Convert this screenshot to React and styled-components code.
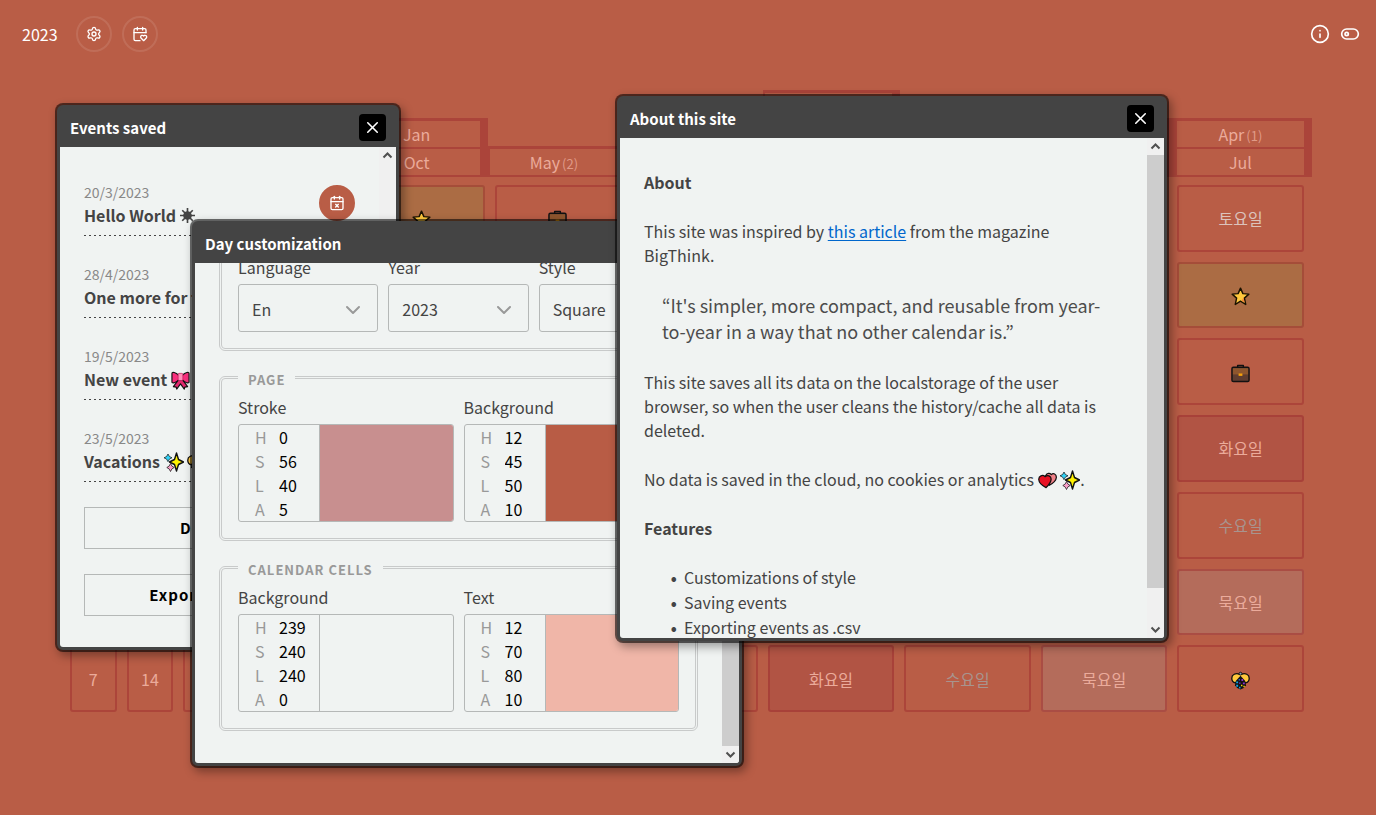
import React from "react";
import styled, { createGlobalStyle, css } from "styled-components";
import { Settings, CalendarX, Info, X, ChevronDown } from "lucide-react";

const page = "#b95d46";
const stroke = "#ab443a";
const pale = "#ebab9b";
const panel = "#f0f3f2";
const ink = "#444";

const GlobalStyle = createGlobalStyle`
  *, *::before, *::after { box-sizing: border-box; }
  body {
    margin: 0;
    background: ${page};
    color: ${ink};
    font-family: "Noto Sans CJK KR", "Noto Sans", sans-serif;
    font-size: 16px;
    line-height: 24px;
  }
  button, input, select { font: inherit; letter-spacing: inherit; }
  h1, h2, h3, p, ul, blockquote { margin: 0; padding: 0; font-size: inherit; }
`;

/* ---------- Page ---------- */

const Page = styled.div`
  position: relative;
  display: flex;
  flex-direction: column;
  min-height: 100vh;
  overflow: hidden;
`;

const TopBar = styled.header`
  display: flex;
  align-items: center;
  gap: 10px;
  height: 68px;
  padding: 0 16px 0 22px;
  color: #fff;
`;

const YearTitle = styled.h1`
  margin-right: 8px;
  font-weight: 400;
`;

const Spacer = styled.div`
  flex: 1;
`;

const RoundButton = styled.button`
  display: grid;
  place-items: center;
  flex: none;
  width: 36px;
  height: 36px;
  padding: 0;
  border: 2px solid ${(p) => (p.$filled ? page : "rgba(255, 255, 255, 0.1)")};
  border-radius: 50%;
  background: ${(p) => (p.$filled ? page : "transparent")};
  color: #fff;
`;

const IconButton = styled.button`
  display: grid;
  place-items: center;
  padding: 0;
  border: 0;
  background: none;
  color: #fff;
`;

const LineIcon = styled.svg`
  width: ${(p) => p.$size}px;
  height: ${(p) => p.$size}px;
  fill: none;
  stroke: currentColor;
  stroke-width: 2;
  stroke-linecap: round;
  stroke-linejoin: round;
`;

/* ---------- Calendar ---------- */

const Calendar = styled.main`
  flex: 1;
  display: grid;
  grid-template-columns: 273fr 961fr;
  grid-template-rows: auto 1fr;
  gap: 8px;
  padding: 22px 64px 103px 70px;
`;

const Months = styled.div`
  grid-column: 2;
  display: grid;
  grid-template-columns: repeat(7, 1fr);
  align-items: end;
`;

const MonthStack = styled.div`
  display: grid;
  gap: 2px;
  padding: 3px 8px 2px 2px;
  background: ${stroke};
`;

const Month = styled.div`
  display: flex;
  justify-content: center;
  align-items: baseline;
  gap: 2px;
  height: 26px;
  line-height: 26px;
  background: ${page};
  color: ${pale};
  small {
    font-size: 13px;
    color: #e09a88;
  }
`;

const Days = styled.div`
  display: grid;
  grid-auto-flow: column;
  grid-template-columns: repeat(5, 1fr);
  grid-template-rows: repeat(7, 1fr);
  gap: 10px;
`;

const Weekdays = styled.div`
  display: grid;
  grid-template-columns: repeat(7, 1fr);
  grid-template-rows: repeat(7, 1fr);
  gap: 10px;
  padding: 0 8px 0 7px;
`;

const Cell = styled.div`
  display: grid;
  place-items: center;
  min-width: 0;
  border: 2px solid rgba(159, 45, 45, 0.5);
  border-radius: 3px;
  background: ${(p) => p.$bg || "transparent"};
  color: ${(p) => p.$color || pale};
`;

/* ---------- Windows ---------- */

const WindowFrame = styled.section`
  position: absolute;
  left: ${(p) => p.$x}px;
  top: ${(p) => p.$y}px;
  width: ${(p) => p.$w}px;
  border: 3px solid ${ink};
  border-radius: 6px;
  background: ${ink};
  box-shadow: 0 0 0 2px rgba(0, 0, 0, 0.55), 3px 4px 10px 2px rgba(0, 0, 0, 0.35);
`;

const TitleBar = styled.header`
  display: flex;
  align-items: center;
  justify-content: space-between;
  height: 39px;
  padding: 0 10px;
  color: #fff;
`;

const Title = styled.h2`
  font-size: 15px;
  font-weight: 600;
`;

const CloseButton = styled.button`
  display: grid;
  place-items: center;
  width: 27px;
  height: 27px;
  padding: 0;
  border: 0;
  border-radius: 4px;
  background: #000;
  color: #fff;
`;

const WindowBody = styled.div`
  display: flex;
  height: 500px;
  background: ${panel};
  border-radius: 0 0 3px 3px;
  overflow: hidden;
`;

const Content = styled.div`
  flex: 1;
  min-width: 0;
  display: flex;
  flex-direction: column;
  gap: ${(p) => p.$gap}px;
  padding: 32px 24px;
  overflow: hidden;
  justify-content: ${(p) => (p.$atEnd ? "flex-end" : "flex-start")};
  > * { flex: none; }
`;

const Scrollbar = styled.div`
  display: flex;
  flex-direction: column;
  width: 17px;
  background: #f0f0f0;
`;

const Arrow = styled.svg`
  flex: none;
  width: 17px;
  height: 17px;
  fill: none;
  stroke: #505050;
  stroke-width: 2;
`;

const Track = styled.div`
  flex: 1;
  display: flex;
  flex-direction: column;
  justify-content: ${(p) => (p.$atEnd ? "flex-end" : "flex-start")};
`;

const Thumb = styled.div`
  height: ${(p) => p.$size}%;
  background: #cdcdcd;
`;

/* ---------- Events ---------- */

const EventRow = styled.article`
  display: flex;
  align-items: center;
  justify-content: space-between;
  padding: 2px 0 9px;
  background: repeating-linear-gradient(90deg, ${ink} 0 2px, transparent 2px 5px) left bottom / 100% 1px no-repeat;
  line-height: 23px;
  button { margin-bottom: 2px; }
`;

const EventDate = styled.time`
  display: block;
  font-size: 14px;
  color: #888;
`;

const EventName = styled.h3`
  height: 23px;
  font-weight: 700;
  white-space: nowrap;
`;

const WideButton = styled.button`
  height: 42px;
  border: 1px solid #b5b8b7;
  background: transparent;
  color: #000;
  font-size: 15px;
  font-weight: 700;
  letter-spacing: 1px;
`;

/* ---------- Day customization ---------- */

const Group = styled.fieldset`
  display: grid;
  grid-template-columns: repeat(${(p) => p.$cols}, minmax(0, 1fr));
  gap: 10px;
  min-width: 0;
  margin: 0;
  padding: 8px 16px 16px;
  border: 3px double #c8caca;
  border-radius: 6px;
`;

const Legend = styled.legend`
  height: 20px;
  padding: 3px 10px 0;
  color: #999;
  font-size: 13px;
  font-weight: 700;
  line-height: 20px;
  letter-spacing: 1px;
  text-transform: uppercase;
`;

const Field = styled.div`
  display: grid;
  gap: 5px;
`;

const boxed = css`
  border: 1px solid #b5b8b7;
  border-radius: 3px;
`;

const SelectBox = styled.div`
  display: grid;
  align-items: center;
  > * { grid-area: 1 / 1; }
  svg {
    justify-self: end;
    margin: 3px 13px 0 0;
    color: #999;
    pointer-events: none;
  }
`;

const Select = styled.select`
  ${boxed}
  appearance: none;
  width: 100%;
  height: 48px;
  padding: 1px 13px 0;
  background: transparent;
  color: ${ink};
`;

const ColorBox = styled.div`
  ${boxed}
  display: grid;
  grid-template-columns: 81px 1fr;
  overflow: hidden;
`;

const Channels = styled.div`
  padding-left: 16px;
  border-right: 1px solid #b5b8b7;
`;

const Channel = styled.label`
  display: grid;
  grid-template-columns: 24px 1fr;
  height: 24px;
  color: #999;
`;

const ChannelInput = styled.input`
  width: 100%;
  height: 24px;
  padding: 0;
  border: 0;
  background: none;
  color: #000;
`;

const Swatch = styled.div`
  background: ${(p) => p.$color};
`;

/* ---------- About ---------- */

const Heading = styled.h3`
  font-weight: 700;
`;

const Link = styled.a`
  color: #06c;
  text-underline-offset: 2px;
`;

const Quote = styled.blockquote`
  padding: 0 18px 1px;
  color: #4c4c4c;
  font-size: 18px;
  font-weight: 400;
  line-height: 26px;
`;

const Features = styled.ul`
  padding-left: 40px;
  line-height: 25px;
  list-style-type: "•  ";
  li::marker { font-weight: 700; }
`;

/* ---------- Emoji drawings ---------- */

const Emoji = styled.svg`
  display: inline-block;
  width: ${(p) => p.$size || 19}px;
  height: ${(p) => p.$size || 19}px;
  vertical-align: ${(p) => (p.$size === 15 ? -1 : -4)}px;
  stroke-linejoin: round;
`;

const Star = () => (
  <Emoji viewBox="0 0 20 20" role="img" aria-label="star">
    <path d="M10 1.2 12.5 7l6.3.5-4.7 4.2 1.4 6.7-5.5-3.5-5.5 3.5 1.4-6.7L1.2 7.5 7.5 7Z" fill="#ffc83d" stroke="#1a1200" strokeWidth="1.5" />
    <path d="m13 11 1.5 5.5-3-2Z" fill="#f2803a" />
  </Emoji>
);

const Briefcase = () => (
  <Emoji viewBox="0 0 20 20" role="img" aria-label="briefcase">
    <path d="M7 4V1.5h6V4" fill="none" stroke="#111" strokeWidth="1.5" />
    <rect x="1" y="3.5" width="18" height="15" rx="1.5" fill="#603d30" stroke="#111" strokeWidth="1.5" />
    <path d="M2 4.500h16V11H2Z" fill="#8e562e" />
    <rect x="8" y="10" width="4" height="2.5" fill="#f7a30b" />
  </Emoji>
);

const Bug = () => (
  <Emoji viewBox="0 0 20 20" role="img" aria-label="bee">
    <path d="M9 3.500C5 1.500.8 4 .8 7.500c0 3 1.500 4.500 4 5L10 9l5.200 3.500c2.500-.5 4-2 4-5C19.200 4 15 1.500 11 3.500Z" fill="#ffc83d" stroke="#111" strokeWidth="1.4" />
    <path d="M10 5 5 10.500 4.200 15 6.500 18l3.500 1.500 3.500-1.500 2.300-3-.8-4.500Z" fill="#111" />
    <circle cx="10" cy="2.8" r="1.5" fill="#8fa3ad" stroke="#111" />
    <path d="M5.500 11h2v2h-2Zm0 3.500h2v2h-2Zm3 2H10v2H8.500Z" fill="#0aa5e8" />
    <path d="M11 8.500h1.800v2H11Zm1.500 3.500h2v2h-2Zm-4 0H10v1.500H8.500Z" fill="#8b2fd0" />
    <path d="M10.500 14.500H12V16h-1.500Zm2.500 1h1.500V17H13Z" fill="#f7d308" />
    <path d="M8 8.500h1.500V10H8Z" fill="#2b62d9" />
  </Emoji>
);

const Sparkles = () => (
  <Emoji viewBox="0 0 20 20" $size={20} role="img" aria-label="sparkles">
    <path d="M12.5 1 14.5 7.500 19.500 10l-5 2.500-2 6.500-2-6.500-5-2.500 5-2.500Z" fill="#fff100" stroke="#111" strokeWidth="1.4" />
    <path d="m4 2 1.400 2.500L8 5.800 5.400 7.100 4 9.700 2.600 7.100 0 5.800l2.600-1.300Z" fill="#31d2f7" stroke="#111" strokeWidth=".7" />
    <path d="m6.500 11.500 1.400 2.600 2.300 1.400-2.300 1.400-1.400 2.600-1.400-2.600-2.300-1.400 2.300-1.400Z" fill="#f9a0c8" stroke="#111" strokeWidth=".7" />
  </Emoji>
);

const Hearts = () => (
  <Emoji viewBox="0 0 20 20" role="img" aria-label="hearts">
    <path d="M12 15 8 5c1.500-3 4.500-3 6-1.200C16 2 19.500 3 19.300 6.800 19.100 10.500 15.500 13 12 15Z" fill="#f08088" stroke="#111" strokeWidth="1.3" />
    <path d="M8.500 17.500C4.500 15.500 1 12.500.8 9 .6 5 5 3.500 7.500 6c2.500-2.500 6.500-.8 6.300 2.800-.2 3.200-2.800 6.200-5.300 8.700Z" fill="#e81224" stroke="#111" strokeWidth="1.3" />
  </Emoji>
);

const Ribbon = () => (
  <Emoji viewBox="0 0 20 20" role="img" aria-label="ribbon">
    <path d="m8 9-5.500 7.500 3 .5.5 2L10 13.500l4 5.500.5-2 3-.5L12 9Z" fill="#e3286e" stroke="#111" strokeWidth="1.2" />
    <path d="M8 4.500C5 1.500 1 .5 1 2.500v9c0 2 4 1 7-2h4c3 3 7 4 7 2v-9c0-2-4-1-7 2Z" fill="#f92f7d" stroke="#111" strokeWidth="1.2" />
    <rect x="7.5" y="2.5" width="5" height="7.5" rx="1" fill="#ff8db8" stroke="#c51a5c" strokeWidth=".8" />
  </Emoji>
);

const Sun = () => (
  <Emoji viewBox="0 0 20 20" $size={15} role="img" aria-label="sun">
    <path d="M10 0v20M0 10h20M3 3l14 14M17 3 3 17" stroke="#444" strokeWidth="2.2" />
    <circle cx="10" cy="10" r="5.8" fill="#444" />
  </Emoji>
);

/* ---------- Line icons ---------- */

const CalendarHeart = () => (
  <LineIcon viewBox="0 0 24 24" $size={16} aria-hidden="true">
    <path d="M21 10V6a2 2 0 0 0-2-2H5a2 2 0 0 0-2 2v14c0 1.1.9 2 2 2h7" />
    <path d="M16 2v4M8 2v4M3 10h18" />
    <path d="M21.29 14.7a2.430 2.430 0 0 0-2.650-.52c-.3.12-.57.3-.8.53l-.34.34-.35-.34a2.430 2.430 0 0 0-2.650-.53c-.3.12-.56.3-.79.53-.95.94-1 2.530.2 3.740L17.5 22l3.600-3.550c1.200-1.210 1.140-2.800.19-3.740Z" />
  </LineIcon>
);

const Toggle = () => (
  <LineIcon viewBox="0 0 24 24" $size={20} aria-hidden="true">
    <rect x="2" y="6" width="20" height="12" rx="6" />
    <circle cx="8" cy="12" r="2" />
  </LineIcon>
);

/* ---------- Data ---------- */

const monthStacks = [
  [["Jan"], ["Oct"]],
  [["May", 2]],
  [["Aug"]],
  [["Feb"], ["Mar"], ["Nov"]],
  [["Jun"]],
  [["Sep"], ["Dec"]],
  [["Apr", 1], ["Jul"]],
];

const weekdays = [
  { label: <Star />, bg: "#ab6c44" },
  { label: <Briefcase /> },
  { label: "화요일", bg: "#b15444" },
  { label: "수요일", color: "#a8948e" },
  { label: "묵요일", bg: "#b46c5b" },
  { label: <Bug /> },
  { label: "토요일", color: "#dcc3bc" },
];

const events = [
  { date: "20/3/2023", name: "Hello World", icons: <Sun /> },
  { date: "28/4/2023", name: "One more for the", icons: null },
  { date: "19/5/2023", name: "New event", icons: <Ribbon /> },
  { date: "23/5/2023", name: "Vacations", icons: <><Sparkles /> <Bug /></> },
];

/* ---------- Parts ---------- */

function ScrollBar({ size, atEnd }) {
  return (
    <Scrollbar aria-hidden="true">
      <Arrow viewBox="0 0 17 17"><path d="m4.5 10.5 4-4 4 4" /></Arrow>
      <Track $atEnd={atEnd}>{size > 0 && <Thumb $size={size} />}</Track>
      {size > 0 && <Arrow viewBox="0 0 17 17"><path d="m4.5 6.5 4 4 4-4" /></Arrow>}
    </Scrollbar>
  );
}

function Window({ title, x, y, w, scroll, scrolledToEnd, gap, children }) {
  return (
    <WindowFrame $x={x} $y={y} $w={w} aria-label={title}>
      <TitleBar>
        <Title>{title}</Title>
        <CloseButton aria-label={`Close ${title}`}><X size={19} strokeWidth={2} /></CloseButton>
      </TitleBar>
      <WindowBody>
        <Content $gap={gap} $atEnd={scrolledToEnd}>{children}</Content>
        <ScrollBar size={scroll} atEnd={scrolledToEnd} />
      </WindowBody>
    </WindowFrame>
  );
}

function SelectField({ id, label, value }) {
  return (
    <Field>
      <label htmlFor={id}>{label}</label>
      <SelectBox>
        <Select id={id} defaultValue={value}><option>{value}</option></Select>
        <ChevronDown size={24} />
      </SelectBox>
    </Field>
  );
}

function ColorField({ label, values, color }) {
  return (
    <Field role="group" aria-label={label}>
      <span>{label}</span>
      <ColorBox>
        <Channels>
          {["H", "S", "L", "A"].map((c, i) => (
            <Channel key={c}>
              {c}
              <ChannelInput defaultValue={values[i]} />
            </Channel>
          ))}
        </Channels>
        <Swatch $color={color} />
      </ColorBox>
    </Field>
  );
}

export default function App() {
  const days = Array.from({ length: 31 }, (_, i) => i + 1);
  return (
    <>
      <GlobalStyle />
      <Page>
        <TopBar>
          <YearTitle>2023</YearTitle>
          <RoundButton aria-label="Settings"><Settings size={16} /></RoundButton>
          <RoundButton aria-label="Saved events"><CalendarHeart /></RoundButton>
          <Spacer />
          <IconButton aria-label="About"><Info size={20} /></IconButton>
          <IconButton aria-label="Toggle theme"><Toggle /></IconButton>
        </TopBar>

        <Calendar>
          <Months>
            {monthStacks.map((stack) => (
              <MonthStack key={stack[0][0]}>
                {stack.map(([name, count]) => (
                  <Month key={name}>{name}{count && <small>({count})</small>}</Month>
                ))}
              </MonthStack>
            ))}
          </Months>
          <Days>
            {days.map((d) => <Cell key={d}>{d}</Cell>)}
          </Days>
          <Weekdays>
            {Array.from({ length: 49 }, (_, i) => {
              const day = weekdays[((i % 7) + Math.floor(i / 7)) % 7];
              return <Cell key={i} $bg={day.bg} $color={day.color}><span>{day.label}</span></Cell>;
            })}
          </Weekdays>
        </Calendar>

        <Window title="Events saved" x={57} y={105} w={342} scroll={0} gap={25}>
          {events.map((e) => (
            <EventRow key={e.date}>
              <div>
                <EventDate>{e.date}</EventDate>
                <EventName>{e.name} {e.icons}</EventName>
              </div>
              <RoundButton $filled aria-label={`Delete ${e.name}`}><CalendarX size={16} /></RoundButton>
            </EventRow>
          ))}
          <WideButton>Delete all</WideButton>
          <WideButton>Export all as .csv</WideButton>
        </Window>

        <Window title="Day customization" x={192} y={221} w={550} scroll={88} scrolledToEnd gap={16}>
          <Group $cols={3}>
            <Legend>General</Legend>
            <SelectField id="language" label="Language" value="En" />
            <SelectField id="year" label="Year" value="2023" />
            <SelectField id="style" label="Style" value="Square" />
          </Group>
          <Group $cols={2}>
            <Legend>Page</Legend>
            <ColorField label="Stroke" values={[0, 56, 40, 5]} color="#c88f8f" />
            <ColorField label="Background" values={[12, 45, 50, 10]} color="#b85c45" />
          </Group>
          <Group $cols={2}>
            <Legend>Calendar cells</Legend>
            <ColorField label="Background" values={[239, 240, 240, 0]} color="transparent" />
            <ColorField label="Text" values={[12, 70, 80, 10]} color="#f0b6a8" />
          </Group>
        </Window>

        <Window title="About this site" x={617} y={96} w={550} scroll={93} gap={25}>
          <Heading>About</Heading>
          <p>
            This site was inspired by <Link href="#article">this article</Link> from the magazine BigThink.
          </p>
          <Quote>“It's simpler, more compact, and reusable from year-to-year in a way that no other calendar is.”</Quote>
          <p>
            This site saves all its data on the localstorage of the user browser, so when the user cleans the
            history/cache all data is deleted.
          </p>
          <p>No data is saved in the cloud, no cookies or analytics <Hearts /> <Sparkles />.</p>
          <Heading>Features</Heading>
          <Features>
            <li>Customizations of style</li>
            <li>Saving events</li>
            <li>Exporting events as .csv</li>
          </Features>
        </Window>
      </Page>
    </>
  );
}
